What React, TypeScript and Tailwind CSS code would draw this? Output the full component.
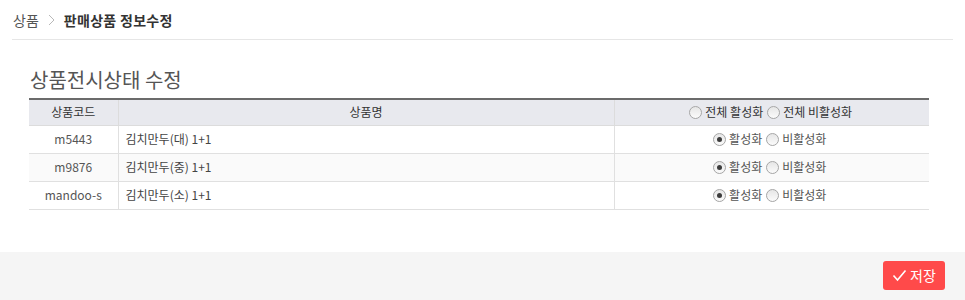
import React from "react";

const font = { fontFamily: '"Noto Sans CJK KR", "Noto Sans", sans-serif' };

function Radio({ checked }: { checked?: boolean }) {
  return (
    <span className="inline-flex w-[13px] h-[13px] rounded-full border border-[#a6a6a6] bg-gradient-to-b from-[#e6e6e6] to-[#fbfbfb] items-center justify-center align-middle shrink-0">
      {checked && <span className="w-[5px] h-[5px] rounded-full bg-[#3c3c3c]" />}
    </span>
  );
}

const rows = [
  { code: "m5443", name: "김치만두(대) 1+1", bg: "bg-white" },
  { code: "m9876", name: "김치만두(중) 1+1", bg: "bg-[#fafafa]" },
  { code: "mandoo-s", name: "김치만두(소) 1+1", bg: "bg-white" },
];

export default function App() {
  return (
    <div className="w-[965px] h-[300px] bg-white flex flex-col" style={font}>
      <div className="px-[12px]">
        <div className="h-[40px] flex items-center pl-[1px] border-b border-[#e6e6e6] w-[941px] text-[14px] leading-none">
          <span className="text-[#555]">상품</span>
          <svg className="mx-[9px]" width="7" height="12" viewBox="0 0 7 12" fill="none">
            <path d="M1 1 L6 6 L1 11" stroke="#b8b8b8" strokeWidth="1" />
          </svg>
          <span className="text-[#333] font-bold tracking-[0.3px]">판매상품 정보수정</span>
        </div>
      </div>
      <div className="pl-[29px] pt-[26px]">
        <div className="text-[20px] leading-[28px] text-[#555] pl-[1px] mb-[4px]">상품전시상태 수정</div>
        <table className="w-[900px] border-collapse text-[12px] table-fixed border-t-2 border-[#6b6b6b]">
          <colgroup>
            <col className="w-[89px]" />
            <col className="w-[496px]" />
            <col className="w-[315px]" />
          </colgroup>
          <thead>
            <tr className="h-[26px] bg-[#e8e9ee] text-[#333]">
              <th className="font-normal border-b border-[#dcdcdc] border-r border-r-[#dcdcdc] p-0">상품코드</th>
              <th className="font-normal border-b border-[#dcdcdc] border-r border-r-[#dcdcdc] p-0">상품명</th>
              <th className="font-normal border-b border-[#dcdcdc] p-0">
                <div className="flex items-center justify-center gap-[3px] pr-[2px]">
                  <Radio />
                  <span className="mr-[1px]">전체 활성화</span>
                  <Radio />
                  <span>전체 비활성화</span>
                </div>
              </th>
            </tr>
          </thead>
          <tbody>
            {rows.map((r) => (
              <tr key={r.code} className={`h-[28px] ${r.bg} text-[#555]`}>
                <td className="text-center border-b border-[#e0e0e0] border-r border-r-[#e0e0e0] p-0">{r.code}</td>
                <td className="pl-[7px] border-b border-[#e0e0e0] border-r border-r-[#e0e0e0] p-0 text-[#444]">{r.name}</td>
                <td className="border-b border-[#e0e0e0] p-0">
                  <div className="flex items-center justify-center gap-[3px] text-[#555] pr-[4px]">
                    <Radio checked />
                    <span className="mr-[1px]">활성화</span>
                    <Radio />
                    <span>비활성화</span>
                  </div>
                </td>
              </tr>
            ))}
          </tbody>
        </table>
      </div>
      <div className="mt-auto h-[48px] bg-[#f5f5f5] flex justify-end items-start pt-[9px] pr-[20px]">
        <button className="w-[62px] h-[29px] rounded-[3px] bg-[#ff4a4a] text-white text-[14px] flex items-center justify-center gap-[3px]">
          <svg width="15" height="13" viewBox="0 0 15 13" fill="none">
            <path d="M1.5 6.5 L5.5 11 L13.5 1.5" stroke="white" strokeWidth="1.6" />
          </svg>
          <span>저장</span>
        </button>
      </div>
    </div>
  );
}
